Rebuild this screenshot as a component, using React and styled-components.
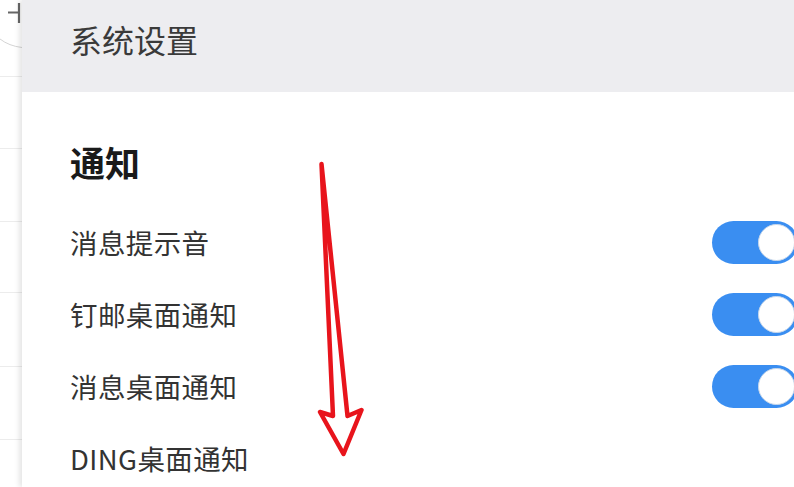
import React from "react";
import styled, { createGlobalStyle } from "styled-components";

const GlobalStyle = createGlobalStyle`
  html, body {
    margin: 0;
    padding: 0;
    background: #fff;
    overflow: hidden;
  }
  body {
    font-family: "Microsoft YaHei", "Noto Sans CJK SC", "Noto Sans", sans-serif;
    color: #333;
  }
`;

const Page = styled.div`
  position: relative;
  width: 794px;
  height: 487px;
  display: flex;
  overflow: hidden;
  background: #fff;
`;

// the list behind the settings drawer, only a sliver of it shows
const BackList = styled.div`
  width: 22px;
  flex-shrink: 0;
  display: flex;
  flex-direction: column;
  background: #fff;
`;

const BackTop = styled.div`
  height: 77px;
  flex-shrink: 0;
  border-bottom: 1px solid #ececec;
  box-sizing: border-box;

  svg {
    display: block;
  }
`;

const BackRow = styled.div`
  height: ${(p) => p.h || 72}px;
  flex-shrink: 0;
  border-bottom: 1px solid #ececec;
  box-sizing: border-box;
`;

const Panel = styled.div`
  position: relative;
  width: 790px;
  flex-shrink: 0;
  display: flex;
  flex-direction: column;
  background: #fff;
  box-shadow: -3px 0 5px rgba(0, 0, 0, 0.1);
`;

const Header = styled.div`
  height: 92px;
  flex-shrink: 0;
  box-sizing: border-box;
  padding: 18px 0 0 48px;
  background: #ededf0;
  font-size: 32px;
  line-height: 42px;
  color: #3a3a3a;
`;

const Body = styled.div`
  padding: 46px 14px 0 48px;
  display: flex;
  flex-direction: column;
`;

const Section = styled.h2`
  margin: 0 0 20px;
  font-size: 35px;
  line-height: 48px;
  font-weight: 700;
  color: #1a1a1a;
`;

const Row = styled.div`
  height: 72px;
  display: flex;
  align-items: center;
  justify-content: space-between;
`;

const Label = styled.span`
  font-size: 27.5px;
  line-height: 36px;
  color: #333;
  letter-spacing: 0.4px;
`;

const Toggle = styled.div`
  position: relative;
  width: 86px;
  height: 43px;
  border-radius: 22px;
  background: ${(p) => (p.on ? "#3a8ef1" : "#d6d6db")};

  &::after {
    content: "";
    position: absolute;
    top: 3px;
    ${(p) => (p.on ? "right: 3px;" : "left: 3px;")}
    width: 37px;
    height: 37px;
    border-radius: 50%;
    box-sizing: border-box;
    background: #fff;
    border: 1px solid #c9d8ea;
  }
`;

const Arrow = styled.svg`
  position: absolute;
  left: 0;
  top: 0;
  pointer-events: none;
`;

const items = [
  { label: "消息提示音", on: true },
  { label: "钉邮桌面通知", on: true },
  { label: "消息桌面通知", on: true },
  { label: "DING桌面通知", on: null },
];

export default function App() {
  return (
    <>
      <GlobalStyle />
      <Page>
        <BackList>
          <BackTop>
            <svg width="22" height="76" viewBox="0 0 22 76">
              <path d="M8 12.5H20M19 3V23" stroke="#666" strokeWidth="2.2" fill="none" />
              <path d="M0 39 Q9 46 22 47.5" stroke="#d4d4d4" strokeWidth="1" fill="none" />
            </svg>
          </BackTop>
          <BackRow />
          <BackRow h={73} />
          <BackRow h={71} />
          <BackRow h={74} />
          <BackRow h={73} />
        </BackList>
        <Panel>
          <Header>系统设置</Header>
          <Body>
            <Section>通知</Section>
            {items.map((it) => (
              <Row key={it.label}>
                <Label>{it.label}</Label>
                {it.on !== null && <Toggle on={it.on} />}
              </Row>
            ))}
          </Body>
        </Panel>
        <Arrow width="794" height="487" viewBox="0 0 794 487">
          <path
            d="M321.5 164 L333 416 L320 412 L343.5 454 L361.5 410 L347.5 416 Z"
            fill="#fff"
            stroke="#e8141c"
            strokeWidth="4.5"
            strokeLinejoin="round"
          />
        </Arrow>
      </Page>
    </>
  );
}
